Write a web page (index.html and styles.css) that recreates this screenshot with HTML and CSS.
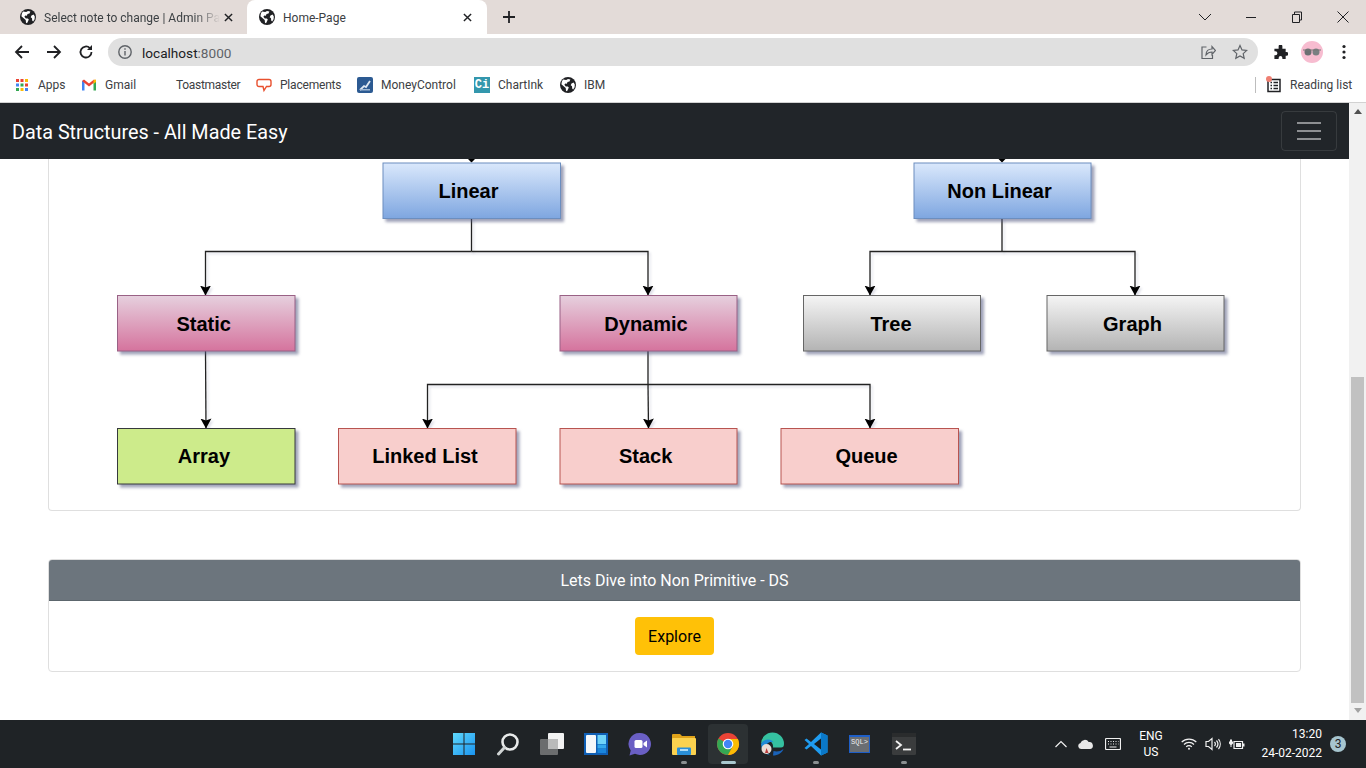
FILE: index.html
```html
<!DOCTYPE html>
<html lang="en">
<head>
  <meta charset="UTF-8">
  <title>Home-Page</title>
  <meta name="viewport" content="width=device-width, initial-scale=1.0">
  <link rel="stylesheet" href="styles.css">
</head>
<body>
  <svg class="defs" width="0" height="0">
    <defs>
      <symbol id="globe" viewBox="0 0 16 16">
        <circle cx="8" cy="8" r="8" fill="#202124"/>
        <path d="M3 2.6l3.2.3L8 2l2.4.6-.9 2-2 .4-.6 1.8-1.6-.3-.9 1.2 1.4 1.7h2l1 1-1 2.4-.8 1.5-1-.6-.3-2.6L3.400 9 1.400 7.300 1.900 4.500zM11.500 6.400l2.100-.8 1.200 1.800-.2 2.800-1.500 2.300-.9-.9-.2-2.400-1.300-.9z" fill="#fff"/>
      </symbol>
      <linearGradient id="grad-blue" x1="0" y1="0" x2="0" y2="1"><stop offset="0" stop-color="#dae8fc"/><stop offset="1" stop-color="#7ea6e0"/></linearGradient>
      <linearGradient id="grad-pink" x1="0" y1="0" x2="0" y2="1"><stop offset="0" stop-color="#e6d0de"/><stop offset="1" stop-color="#d5739d"/></linearGradient>
      <linearGradient id="grad-gray" x1="0" y1="0" x2="0" y2="1"><stop offset="0" stop-color="#f5f5f5"/><stop offset="1" stop-color="#b3b3b3"/></linearGradient>
      <marker id="tip" markerUnits="userSpaceOnUse" markerWidth="11" markerHeight="12" refX="10" refY="6" orient="auto">
        <path d="M0 0.500L10 6L0 11.500L2 6z" fill="#000"/>
      </marker>
    </defs>
  </svg>

  <div class="tabstrip">
    <div class="tab">
      <svg class="fav"><use href="#globe"/></svg>
      <span class="tab-title tab-fade">Select note to change | Admin Pa</span>
      <svg class="tab-x" viewBox="0 0 10 10"><path d="M1 1l8 8M9 1l-8 8"/></svg>
    </div>
    <div class="tab tab-active">
      <svg class="fav"><use href="#globe"/></svg>
      <span class="tab-title">Home-Page</span>
      <svg class="tab-x" viewBox="0 0 10 10"><path d="M1 1l8 8M9 1l-8 8"/></svg>
    </div>
    <svg class="newtab" viewBox="0 0 12 12"><path d="M6 0v12M0 6h12"/></svg>
    <div class="winctl">
      <svg viewBox="0 0 46 14"><path d="M17 4l6 6 6-6"/></svg>
      <svg viewBox="0 0 46 14"><path d="M18 7.500h10"/></svg>
      <svg viewBox="0 0 46 14"><path d="M18.500 4.500h7v8h-7zM20.500 4.500v-2.500h7v8h-2"/></svg>
      <svg viewBox="0 0 46 14"><path d="M17.500 1.500l11 11M28.500 1.500l-11 11"/></svg>
    </div>
  </div>

  <div class="toolbar">
    <svg class="nav-ico" viewBox="0 0 16 16"><path d="M15 8H2M8 2L2 8l6 6"/></svg>
    <svg class="nav-ico" viewBox="0 0 16 16"><path d="M1 8h13M8 2l6 6-6 6"/></svg>
    <svg class="nav-ico" viewBox="0 0 16 16"><path d="M13.500 8a5.500 5.500 0 1 1-1.600-3.900"/><path class="solid" d="M14 1v5H9z"/></svg>
    <div class="omnibox">
      <svg class="info" viewBox="0 0 14 14"><circle cx="7" cy="7" r="6.200"/><path d="M7 6v4.500M7 3.300v1.500"/></svg>
      <span class="url">localhost<span class="url-port">:8000</span></span>
      <svg class="omni-ico omni-share" viewBox="0 0 16 16"><path d="M6.500 3H2v11.500h10.500V11"/><path d="M6 11c0-4 2.500-6 6-6V2.500l3.500 4-3.500 4V8c-2.500 0-4.500 1-6 3z"/></svg>
      <svg class="omni-ico" viewBox="0 0 16 16"><path d="M8 1.500l2 4.400 4.700.5-3.500 3.200 1 4.700L8 11.900l-4.200 2.400 1-4.700L1.300 6.400 6 5.900z"/></svg>
    </div>
    <svg class="puzzle" viewBox="0 0 16 16"><path d="M6 1.500a2 2 0 0 1 4 0V4h3.500v3.500h1a2 2 0 0 1 0 4h-1V15H10v-1.200a2 2 0 0 0-4 0V15H1.500v-4h1a2.200 2.200 0 0 0 0-4.400h-1V4H6z"/></svg>
    <svg class="avatar" viewBox="0 0 22 22">
      <circle cx="11" cy="11" r="11" fill="#f7bcd0"/>
      <circle cx="7" cy="11" r="3.500" fill="#6b6f72"/>
      <circle cx="15" cy="11" r="3.500" fill="#7a7f82"/>
      <path d="M2 9h18" stroke="#777" stroke-width="1"/>
    </svg>
    <svg class="kebab" viewBox="0 0 4 16"><circle cx="2" cy="2.500" r="1.600"/><circle cx="2" cy="8" r="1.600"/><circle cx="2" cy="13.500" r="1.600"/></svg>
  </div>

  <div class="bookmarks">
    <div class="bm">
      <svg class="bm-ico" viewBox="0 0 16 16">
        <g fill="#ea4335"><rect x="2" y="2" width="3" height="3"/><rect x="6.500" y="2" width="3" height="3"/></g><rect x="11" y="2" width="3" height="3" fill="#fbbc04"/>
        <g fill="#4285f4"><rect x="2" y="6.500" width="3" height="3"/></g><rect x="6.500" y="6.500" width="3" height="3" fill="#34a853"/><rect x="11" y="6.500" width="3" height="3" fill="#ea4335"/>
        <rect x="2" y="11" width="3" height="3" fill="#34a853"/><rect x="6.500" y="11" width="3" height="3" fill="#fbbc04"/><rect x="11" y="11" width="3" height="3" fill="#4285f4"/>
      </svg>
      <span class="bm-text bm-apps">Apps</span>
    </div>
    <div class="bm">
      <svg class="bm-ico" viewBox="0 0 16 16">
        <path d="M1 13.500V4l2.500-1L3.500 13.500z" fill="#4285f4"/>
        <path d="M15 13.500V4l-2.500-1v10.500z" fill="#34a853"/>
        <path d="M1 4l2-1.500L8 6.500l5-4L15 4 8 9.500z" fill="#ea4335"/>
        <path d="M12.500 3L15 2.500V5l-2.500 2z" fill="#fbbc04"/>
      </svg>
      <span class="bm-text bm-gmail">Gmail</span>
    </div>
    <div class="bm">
      <span class="bm-ico"></span>
      <span class="bm-text bm-toast">Toastmaster</span>
    </div>
    <div class="bm">
      <svg class="bm-ico" viewBox="0 0 16 16"><path d="M3 2.500h10a2 2 0 0 1 2 2v3a2 2 0 0 1-2 2h-2.500L8 13.500l-1-4H3a2 2 0 0 1-2-2v-3a2 2 0 0 1 2-2z" fill="none" stroke="#e8502e" stroke-width="1.400"/></svg>
      <span class="bm-text bm-place">Placements</span>
    </div>
    <div class="bm">
      <svg class="bm-ico" viewBox="0 0 16 16"><rect width="16" height="16" rx="2" fill="#2c5a92"/><path d="M3 13l4-4 2 1 4-6" fill="none" stroke="#dfe8f2" stroke-width="1.800"/><rect x="3" y="12" width="10" height="1.500" fill="#9fb8d4"/></svg>
      <span class="bm-text bm-money">MoneyControl</span>
    </div>
    <div class="bm">
      <span class="bm-ico ci-badge">Ci</span>
      <span class="bm-text bm-chart">ChartInk</span>
    </div>
    <div class="bm">
      <svg class="bm-ico"><use href="#globe"/></svg>
      <span>IBM</span>
    </div>
    <div class="reading">
      <svg class="bm-ico" viewBox="0 0 16 16">
        <path d="M2 2.500h12v12H2z" fill="none" stroke="#202124" stroke-width="1.500"/>
        <path d="M4.500 5.500h1.500M7.500 5.500h4.500M4.500 8.500h1.500M7.500 8.500h4.500M4.500 11.500h1.500M7.500 11.500h4.500" stroke="#202124" stroke-width="1.300"/>
      </svg>
      <span class="reading-dot"></span>
      <span>Reading list</span>
    </div>
  </div>

  <div class="viewport">
    <div class="page">
      <nav class="navbar">
        <span class="brand">Data Structures - All Made Easy</span>
        <span class="toggler"><i></i><i></i><i></i></span>
      </nav>
      <main class="content">
        <section class="card card-diagram">
          <svg class="diagram" viewBox="49 159 1251 351" width="1251" height="351">
            <g class="lines">
              <path d="M471.500 218v33.500M1002 218v33.500"/>
              <path d="M471.500 251.500H205.500V295.500" marker-end="url(#tip)"/>
              <path d="M471.500 251.500H648V295.500" marker-end="url(#tip)"/>
              <path d="M1002 251.500H870V295.500" marker-end="url(#tip)"/>
              <path d="M1002 251.500H1135V295.500" marker-end="url(#tip)"/>
              <path d="M205.500 351L206 428.500" marker-end="url(#tip)"/>
              <path d="M648 351v33.500H427.500V428.500" marker-end="url(#tip)"/>
              <path d="M648 384.500L648.500 428.500" marker-end="url(#tip)"/>
              <path d="M648 384.500H870V428.500" marker-end="url(#tip)"/>
            </g>
            <path class="top-tip" d="M468 159h7L471.500 162.500zM998.500 159h7L1002 162.500z"/>
            <g class="nodes">
              <rect class="n-blue" x="383" y="163" width="177.500" height="55.500"/>
              <rect class="n-blue" x="914" y="163" width="177" height="55.500"/>
              <rect class="n-pink" x="117.500" y="295.500" width="177.500" height="55.500"/>
              <rect class="n-pink" x="560" y="295.500" width="177" height="55.500"/>
              <rect class="n-gray" x="803.500" y="295.500" width="177" height="55.500"/>
              <rect class="n-gray" x="1047" y="295.500" width="177" height="55.500"/>
              <rect class="n-green" x="117.500" y="428.500" width="177.500" height="55.500"/>
              <rect class="n-red" x="338.500" y="428.500" width="177.500" height="55.500"/>
              <rect class="n-red" x="560" y="428.500" width="177" height="55.500"/>
              <rect class="n-red" x="781" y="428.500" width="177.500" height="55.500"/>
            </g>
            <g class="labels">
              <text x="468.500" y="198">Linear</text>
              <text x="999.500" y="198">Non Linear</text>
              <text x="203.700" y="331">Static</text>
              <text x="646" y="331">Dynamic</text>
              <text x="891" y="331">Tree</text>
              <text x="1132.500" y="331">Graph</text>
              <text x="204" y="463">Array</text>
              <text x="425" y="463">Linked List</text>
              <text x="645.700" y="463">Stack</text>
              <text x="866.500" y="463">Queue</text>
            </g>
          </svg>
        </section>
        <section class="card card-cta">
          <div class="card-header">Lets Dive into Non Primitive - DS</div>
          <div class="card-body"><a class="btn-explore">Explore</a></div>
        </section>
      </main>
    </div>
    <div class="scrollbar">
      <span class="sb-up"></span>
      <div class="sb-track"><div class="sb-thumb"></div></div>
      <span class="sb-down"></span>
    </div>
  </div>

  <footer class="taskbar">
    <div class="task-spacer"></div>
    <div class="task-apps">
      <div class="app">
        <svg viewBox="0 0 24 24">
          <defs><linearGradient id="win" x1="0" y1="0" x2="1" y2="1"><stop offset="0" stop-color="#5fd8fb"/><stop offset="1" stop-color="#1a94f0"/></linearGradient></defs>
          <path d="M1 1h10.500v10.500H1zM12.500 1H23v10.500H12.500zM1 12.500h10.500V23H1zM12.500 12.500H23V23H12.500z" fill="url(#win)"/>
        </svg>
      </div>
      <div class="app">
        <svg viewBox="0 0 24 24"><circle cx="14" cy="10" r="7.500" fill="none" stroke="#e8eaea" stroke-width="2.600"/><path d="M8.500 15.500L2.500 22" stroke="#cfd3d3" stroke-width="3" stroke-linecap="round"/></svg>
      </div>
      <div class="app">
        <svg viewBox="0 0 24 24"><rect x="8" y="1" width="16" height="16" rx="1" fill="#f2f2f2"/><rect x="0" y="7" width="18" height="16" rx="1" fill="#6b6d6e"/><rect x="8" y="7" width="10" height="10" fill="#b9baba"/></svg>
      </div>
      <div class="app">
        <svg viewBox="0 0 24 24"><rect x="0" y="1" width="24" height="22" fill="#0f5fb5"/><rect x="2" y="3" width="10" height="18" rx="1" fill="#f4f7fa"/><rect x="13.500" y="3" width="8.500" height="9" fill="#6fd3f8"/><rect x="13.500" y="12.500" width="8.500" height="4" fill="#33a8ec"/><rect x="13.500" y="17" width="8.500" height="4" fill="#1a86dc"/></svg>
      </div>
      <div class="app">
        <svg viewBox="0 0 24 24"><path d="M12 1a11 11 0 1 1-5 20.800L1.500 23.500l1.200-5A11 11 0 0 1 12 1z" fill="#6a5fc4"/><rect x="6.500" y="8" width="8" height="8" rx="1.500" fill="#fff"/><path d="M15.500 11l3.500-2.500v7L15.500 13z" fill="#fff"/></svg>
      </div>
      <div class="app app-open">
        <svg viewBox="0 0 24 24"><path d="M0 3a1 1 0 0 1 1-1h7l2 2h13v4H0z" fill="#e0a31a"/><rect y="6" width="24" height="17" rx="1" fill="#fbd24f"/><rect x="5" y="15.500" width="14" height="7.500" rx="1" fill="#2a8fd8"/><rect x="8" y="17" width="8" height="2" fill="#aedcf6"/></svg>
      </div>
      <div class="app app-active">
        <svg viewBox="0 0 24 24">
          <circle cx="12" cy="12" r="11" fill="#ea4335"/>
          <path d="M12 12L2.500 6.500A11 11 0 0 0 12 23l5-9z" fill="#34a853"/>
          <path d="M12 7h9.900A11 11 0 0 1 12 23l5-9z" fill="#fbbc04"/>
          <circle cx="12" cy="12" r="5.300" fill="#fff"/>
          <circle cx="12" cy="12" r="4.200" fill="#4285f4"/>
        </svg>
      </div>
      <div class="app">
        <svg viewBox="0 0 24 24">
          <path d="M1 12A11.500 11.500 0 0 1 24 12c0 2.500-1 3.500-3 3.500H13c.5-4-2-7-5.500-6.500C4.500 9.300 2 10 1 12z" fill="#35c1a0"/>
          <path d="M1 12c1.500-3 4-4.500 7-4.500 3 0 5 1.500 5.500 3-4-1.500-8 1-8 6 0 3 2 5.500 5 7A11.500 11.500 0 0 1 1 12z" fill="#1e8ad6"/>
          <path d="M13 23.500c5 0 9-2.500 10.500-6.500-3 2.500-7 3-10 2z" fill="#1a62b8"/>
          <circle cx="6.500" cy="17" r="5" fill="#e9dcd6"/><path d="M5 21l1.500-5 2 5z" fill="#b83a3a"/>
        </svg>
      </div>
      <div class="app app-open">
        <svg viewBox="0 0 24 24"><path d="M17 0.500L23.500 3.500v17L17 23.500 7 14l-4.500 3.500L0.500 16 5 12 0.500 8l2-1.500L7 10z" fill="#1f9cf0"/><path d="M17 6.500L10 12l7 5.500z" fill="#1a1e20"/><path d="M17 0.500L23.500 3.500v17L17 23.500z" fill="#0a78c8"/></svg>
      </div>
      <div class="app">
        <div class="sql-ico"><span>SQL&gt;</span></div>
      </div>
      <div class="app app-open">
        <svg viewBox="0 0 24 24"><rect y="1" width="24" height="22" rx="1.500" fill="#3a3c3d"/><rect y="1" width="24" height="4" fill="#2a2c2d"/><path d="M4 9l5 4-5 4" fill="none" stroke="#f2f2f2" stroke-width="1.800"/><path d="M11 17.500h8" stroke="#f2f2f2" stroke-width="1.800"/></svg>
      </div>
    </div>
    <div class="tray">
      <svg class="tray-chev" viewBox="0 0 12 8"><path d="M0.500 7L6 1.500 11.500 7"/></svg>
      <svg class="tray-cloud" viewBox="0 0 16 10"><path d="M4 10a3 3 0 0 1-.5-5.900 4.500 4.500 0 0 1 8.200-1A3.500 3.500 0 0 1 13 10z"/></svg>
      <svg class="tray-kbd" viewBox="0 0 16 12"><rect x="0.500" y="0.500" width="15" height="11" rx="1"/><path d="M3 3.500h1M5.500 3.500h1M8 3.500h1M10.500 3.500h1M13 3.500h.5M3 6h1M5.500 6h1M8 6h1M10.500 6h1M13 6h.5M4.500 9h7"/></svg>
      <div class="tray-lang"><span>ENG</span><span>US</span></div>
      <svg class="tray-wifi" viewBox="0 0 16 12"><path d="M0.700 4a10.500 10.500 0 0 1 14.600 0M3 6.500a7 7 0 0 1 10 0M5.200 8.800a3.800 3.800 0 0 1 5.600 0"/><circle cx="8" cy="10.800" r="1" class="tray-fill"/></svg>
      <svg class="tray-vol" viewBox="0 0 16 14"><path d="M1 4.500h2.500L7 1.500v11L3.500 9.500H1zM9.500 5a3 3 0 0 1 0 4M11.500 3.500a5.500 5.500 0 0 1 0 7M13.500 2a8 8 0 0 1 0 10"/></svg>
      <svg class="tray-bat" viewBox="0 0 16 12"><path d="M5 3.500h8.500v7H5z"/><path class="tray-fill" d="M7 5h5v4H7zM14 5.500h1.500v3H14zM1 1.500v2H0v2l1.500 1.500v2h1V7L4 5.500v-2H3v-2z"/></svg>
      <div class="tray-clock"><span>13:20</span><span>24-02-2022</span></div>
      <span class="tray-badge">3</span>
    </div>
  </footer>
</body>
</html>
```

FILE: styles.css
```css
* {
  margin: 0;
  padding: 0;
  box-sizing: border-box;
}

body {
  width: 1366px;
  height: 768px;
  overflow: hidden;
  display: flex;
  flex-direction: column;
  font-family: Roboto, Arial, sans-serif;
  background-color: #fff;
  color: #202124;
}

.defs {
  position: absolute;
}

/* browser tabs */
.tabstrip {
  height: 34px;
  flex: none;
  display: flex;
  align-items: stretch;
  background-color: #e3dbd8;
  padding-left: 8px;
}

.tab {
  width: 240px;
  display: flex;
  align-items: center;
  padding: 0 0 0 12px;
  font-size: 12px;
  position: relative;
  border-radius: 8px 8px 0 0;
  color: #3c4043;
}

.tab-active {
  background-color: #fff;
  margin-left: -1px;
  padding-left: 12px;
}

.fav {
  width: 16px;
  height: 16px;
  flex: none;
}

.tab-title {
  margin-left: 8px;
  margin-top: 1px;
  width: 176px;
  white-space: nowrap;
}

.tab-fade {
  -webkit-mask-image: linear-gradient(to right, #000 85%, transparent);
  mask-image: linear-gradient(to right, #000 85%, transparent);
}

.tab-x {
  width: 9px;
  height: 9px;
  margin-left: 4px;
  fill: none;
  stroke: #202124;
  stroke-width: 1.6;
}

.newtab {
  width: 12px;
  height: 12px;
  align-self: center;
  margin-left: 16px;
  fill: none;
  stroke: #202124;
  stroke-width: 1.8;
}

.winctl {
  margin-left: auto;
  display: flex;
  align-items: center;
}

.winctl svg {
  width: 46px;
  height: 14px;
  fill: none;
  stroke: #202124;
  stroke-width: 1;
}

/* address bar */
.toolbar {
  height: 34px;
  flex: none;
  display: flex;
  align-items: center;
  background-color: #fff;
  padding: 2px 0 0 14px;
}

.nav-ico {
  width: 16px;
  height: 16px;
  margin-right: 16px;
  fill: none;
  stroke: #202124;
  stroke-width: 1.8;
}

.nav-ico .solid {
  fill: #202124;
  stroke: none;
}

.omnibox {
  width: 1150px;
  height: 28px;
  margin-left: -2px;
  border-radius: 14px;
  background-color: #e0e0e0;
  display: flex;
  align-items: center;
  padding-left: 10px;
}

.info {
  width: 14px;
  height: 14px;
  fill: none;
  stroke: #5f6368;
  stroke-width: 1.400;
}

.url {
  margin-left: 10px;
  margin-top: 1px;
  font-size: 13.600px;
  color: #202124;
}

.url-port {
  color: #5f6368;
}

.omni-ico {
  width: 16px;
  height: 16px;
  margin-right: 10px;
  fill: none;
  stroke: #5f6368;
  stroke-width: 1.200;
  margin-left: 6px;
}

.omni-share {
  margin-left: auto;
}

.puzzle {
  width: 15px;
  height: 15px;
  margin-left: 15px;
  fill: #202124;
}

.avatar {
  width: 22px;
  height: 22px;
  margin-left: 13px;
}

.kebab {
  width: 4px;
  height: 16px;
  margin-left: 19px;
  fill: #202124;
}

/* bookmarks */
.bookmarks {
  height: 35px;
  flex: none;
  display: flex;
  align-items: center;
  gap: 16px;
  padding: 0 14px 1px 14px;
  background-color: #fff;
  border-bottom: 1px solid #d2d2d2;
  font-size: 12px;
  color: #3c4043;
}

.bm {
  display: flex;
  align-items: center;
  gap: 8px;
}

.bm-apps { width: 27px; }
.bm-gmail { width: 31px; }
.bm-toast { width: 64px; letter-spacing: -0.3px; white-space: nowrap; }
.bm-place { width: 61px; letter-spacing: -0.2px; }
.bm-money { width: 77px; }
.bm-chart { width: 46px; }

.bm-ico {
  width: 16px;
  height: 16px;
  flex: none;
}

.ci-badge {
  background-color: #3397ad;
  color: #fff;
  font-family: "Liberation Mono", monospace;
  font-size: 12px;
  font-weight: 700;
  line-height: 16px;
  text-align: center;
}

.reading {
  width: 97px;
  margin-left: auto;
  display: flex;
  align-items: center;
  gap: 8px;
  position: relative;
  border-left: 1px solid #bdbdbd;
  padding-left: 10px;
  height: 16px;
  white-space: nowrap;
}

.reading-dot {
  position: absolute;
  left: 10px;
  top: -1px;
  width: 6px;
  height: 6px;
  border-radius: 50%;
  background-color: #ef7f72;
}

/* page */
.viewport {
  height: 617px;
  flex: none;
  display: flex;
}

.page {
  width: 1349px;
  display: flex;
  flex-direction: column;
}

.navbar {
  height: 56px;
  flex: none;
  background-color: #212529;
  display: flex;
  align-items: center;
  justify-content: space-between;
  padding: 0 12px;
}

.brand {
  margin-top: 2px;
  font-size: 19.800px;
  color: #fff;
}

.toggler {
  width: 56px;
  height: 40px;
  border: 1px solid rgba(255, 255, 255, 0.1);
  border-radius: 4px;
  display: flex;
  flex-direction: column;
  align-items: center;
  justify-content: center;
  gap: 6px;
}

.toggler i {
  display: block;
  width: 24px;
  height: 2px;
  background-color: #8d8f92;
}

.content {
  flex: 1;
  padding: 0 48px;
  display: flex;
  flex-direction: column;
  gap: 48px;
}

.card {
  border: 1px solid #dfdfdf;
  border-radius: 4px;
  overflow: hidden;
}

.card-diagram {
  height: 352px;
  border-top: none;
  border-radius: 0 0 4px 4px;
}

.diagram {
  display: block;
}

.lines path {
  fill: none;
  stroke: #222;
  stroke-width: 1.300;
  filter: drop-shadow(2px 2px 1px rgba(80, 85, 125, 0.18));
}

.top-tip {
  fill: #000;
}

.nodes rect {
  stroke-width: 1;
  filter: drop-shadow(3px 3px 1.5px rgba(80, 85, 125, 0.55));
}

.n-blue {
  fill: url(#grad-blue);
  stroke: #6c8ebf;
}

.n-pink {
  fill: url(#grad-pink);
  stroke: #996185;
}

.n-gray {
  fill: url(#grad-gray);
  stroke: #666;
}

.n-green {
  fill: #cdeb8b;
  stroke: #36393d;
}

.n-red {
  fill: #f8cecc;
  stroke: #b85450;
}

.labels text {
  font-family: "Liberation Sans", Arial, sans-serif;
  font-size: 20px;
  font-weight: 700;
  fill: #000;
  text-anchor: middle;
}

.card-cta {
  height: 113px;
}

.card-header {
  height: 41px;
  background-color: #6c757d;
  border-bottom: 1px solid #5c666d;
  color: #fff;
  font-size: 16px;
  line-height: 42px;
  text-align: center;
}

.card-body {
  display: flex;
  justify-content: center;
  padding-top: 16px;
}

.btn-explore {
  width: 79px;
  height: 38px;
  border-radius: 4px;
  background-color: #ffc107;
  color: #000;
  font-size: 16px;
  line-height: 40px;
  text-align: center;
}

/* scrollbar */
.scrollbar {
  width: 17px;
  background-color: #f1f1f1;
  display: flex;
  flex-direction: column;
  align-items: center;
}

.sb-up,
.sb-down {
  flex: none;
  width: 0;
  border-left: 4px solid transparent;
  border-right: 4px solid transparent;
}

.sb-up {
  height: 0;
  margin-top: 6px;
  border-bottom: 5px solid #505050;
}

.sb-down {
  height: 0;
  margin-top: 5px;
  margin-bottom: 7px;
  border-top: 5px solid #a3a3a3;
}

.sb-track {
  flex: 1;
  width: 100%;
  display: flex;
  flex-direction: column;
  justify-content: flex-end;
  align-items: center;
}

.sb-thumb {
  width: 13px;
  height: 326px;
  background-color: #c1c1c1;
}

/* windows taskbar */
.taskbar {
  height: 48px;
  flex: none;
  display: grid;
  grid-template-columns: 1fr auto 1fr;
  align-items: center;
  background-color: #1f2326;
  color: #fff;
}

.task-apps {
  display: flex;
  margin-left: 1px;
}

.app {
  width: 44px;
  height: 40px;
  display: flex;
  align-items: center;
  justify-content: center;
  position: relative;
  border-radius: 4px;
}

.app svg {
  width: 24px;
  height: 24px;
}

.app-open::after,
.app-active::after {
  content: "";
  position: absolute;
  left: 50%;
  bottom: 0;
  width: 6px;
  height: 3px;
  margin-left: -3px;
  border-radius: 2px;
  background-color: #8b8f91;
}

.app-active {
  background-color: #2c3133;
  width: 40px;
  margin: 0 2px;
}

.app-active::after {
  width: 15px;
  margin-left: -7px;
  background-color: #a9c8cf;
}

.sql-ico {
  width: 21px;
  height: 18px;
  background-color: #6a6e72;
  border: 1px solid #1e5fc8;
  border-top-width: 2px;
  font-family: "Liberation Mono", monospace;
  font-size: 7px;
  color: #efefef;
  text-align: center;
  line-height: 10px;
}

.tray {
  display: flex;
  align-items: center;
  justify-content: flex-end;
  padding-right: 20px;
  font-size: 12px;
}

.tray svg {
  fill: none;
  stroke: #f0f0f0;
  stroke-width: 1.200;
}

.tray-chev {
  width: 12px;
  height: 8px;
}

.tray .tray-cloud {
  width: 16px;
  height: 10px;
  margin-left: 10px;
  fill: #e8e8e8;
  stroke: none;
}

.tray-kbd {
  width: 16px;
  height: 12px;
  margin-left: 12px;
}

.tray-lang {
  width: 32px;
  margin-left: 14px;
  display: flex;
  flex-direction: column;
  align-items: center;
  line-height: 16px;
}

.tray-wifi {
  width: 16px;
  height: 12px;
  margin-left: 14px;
}

.tray-vol {
  width: 16px;
  height: 14px;
  margin-left: 8px;
}

.tray-bat {
  width: 16px;
  height: 12px;
  margin-left: 8px;
}

.tray .tray-fill {
  fill: #f0f0f0;
  stroke: none;
}

.tray-clock {
  width: 68px;
  margin-left: 9px;
  display: flex;
  flex-direction: column;
  align-items: flex-end;
  line-height: 19px;
  white-space: nowrap;
}

.tray-badge {
  width: 16px;
  height: 16px;
  margin-left: 8px;
  border-radius: 50%;
  background-color: #a6c5cf;
  color: #1f2326;
  font-size: 12px;
  line-height: 16px;
  text-align: center;
}
```
